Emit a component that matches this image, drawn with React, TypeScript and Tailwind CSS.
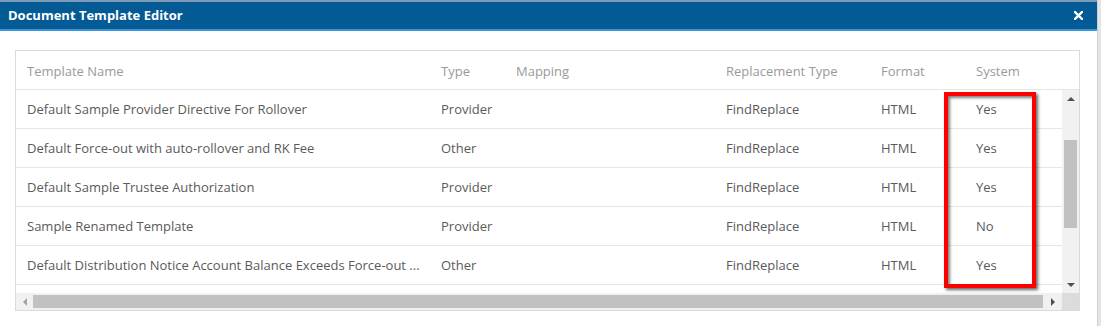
import React from "react";

type Row = {
    name: string;
    type: string;
    mapping: string;
    replacement: string;
    format: string;
    system: string;
};

const rows: Row[] = [
    { name: "Default Sample Provider Directive For Rollover", type: "Provider", mapping: "", replacement: "FindReplace", format: "HTML", system: "Yes" },
    { name: "Default Force-out with auto-rollover and RK Fee", type: "Other", mapping: "", replacement: "FindReplace", format: "HTML", system: "Yes" },
    { name: "Default Sample Trustee Authorization", type: "Provider", mapping: "", replacement: "FindReplace", format: "HTML", system: "Yes" },
    { name: "Sample Renamed Template", type: "Provider", mapping: "", replacement: "FindReplace", format: "HTML", system: "No" },
    { name: "Default Distribution Notice Account Balance Exceeds Force-out ...", type: "Other", mapping: "", replacement: "FindReplace", format: "HTML", system: "Yes" },
];

const cols = ["w-[414px]", "w-[75px]", "w-[210px]", "w-[155px]", "w-[95px]", "flex-1"];

const Cells: React.FC<{ values: string[]; className?: string }> = ({ values, className }) => (
    <div className={"flex items-center h-[39px] border-b border-[#e6e6e6] " + (className || "")}>
        {values.map((v, i) => (
            <div key={i} className={cols[i] + " shrink-0 pl-[11px] whitespace-nowrap"}>
                {v}
            </div>
        ))}
    </div>
);

export default function App() {
    return (
        <div className="w-[1101px] h-[326px] bg-[#e4e4e4] font-['Open_Sans',sans-serif] overflow-hidden">
            <div className="w-[1098px] h-full bg-white border-r border-[#d0d0d0] flex flex-col">
                <div className="h-[2px] bg-[#7e9cb7]" />
                <div className="h-[27px] bg-[#035a94] flex items-center justify-between pl-2 pr-[14px] text-white font-bold text-[13px]">
                    <span>Document Template Editor</span>
                    <svg width="9" height="9" viewBox="0 0 9 9">
                        <path d="M1 1 L8 8 M8 1 L1 8" stroke="white" strokeWidth="2.4" strokeLinecap="square" />
                    </svg>
                </div>
                <div className="h-[2px] bg-[#3d95d9]" />

                <div className="pt-[19px] pl-[15px]">
                    <div className="relative w-[1065px] border border-[#dadada] text-[13px]">
                        <Cells values={["Template Name", "Type", "Mapping", "Replacement Type", "Format", "System"]} className="text-[#9a9a9a] pt-[3px]" />

                        <div className="flex">
                            <div className="w-[1046px] h-[203px] overflow-hidden text-[#5a5a5a]">
                                {rows.map((r, i) => (
                                    <Cells key={i} values={[r.name, r.type, r.mapping, r.replacement, r.format, r.system]} className="pt-[2px]" />
                                ))}
                            </div>
                            {/* vertical scrollbar */}
                            <div className="w-[17px] h-[203px] bg-[#f1f1f1] flex flex-col items-center">
                                <div className="h-[17px] flex items-center justify-center">
                                    <div className="w-0 h-0 border-x-[4px] border-x-transparent border-b-[4px] border-b-[#505050]" />
                                </div>
                                <div className="mt-[33px] w-[13px] h-[88px] bg-[#c1c1c1]" />
                                <div className="flex-1" />
                                <div className="h-[17px] flex items-center justify-center">
                                    <div className="w-0 h-0 border-x-[4px] border-x-transparent border-t-[4px] border-t-[#505050]" />
                                </div>
                            </div>
                        </div>

                        {/* horizontal scrollbar */}
                        <div className="flex h-[17px]">
                            <div className="w-[1046px] bg-[#f1f1f1] flex items-center">
                                <div className="w-[17px] flex items-center justify-center">
                                    <div className="w-0 h-0 border-y-[4px] border-y-transparent border-r-[4px] border-r-[#a3a3a3]" />
                                </div>
                                <div className="w-[1010px] h-[13px] bg-[#c1c1c1]" />
                                <div className="w-[19px] flex items-center justify-center">
                                    <div className="w-0 h-0 border-y-[4px] border-y-transparent border-l-[4px] border-l-[#505050]" />
                                </div>
                            </div>
                            <div className="w-[17px] bg-[#dcdcdc]" />
                        </div>

                        {/* highlight annotation */}
                        <div className="absolute left-[928px] top-[41px] w-[92px] h-[196px] border-[4px] border-[#ff0000] shadow-[2px_2px_3px_rgba(0,0,0,0.6),inset_2px_2px_3px_rgba(0,0,0,0.5)]" />
                    </div>
                </div>
            </div>
        </div>
    );
}
